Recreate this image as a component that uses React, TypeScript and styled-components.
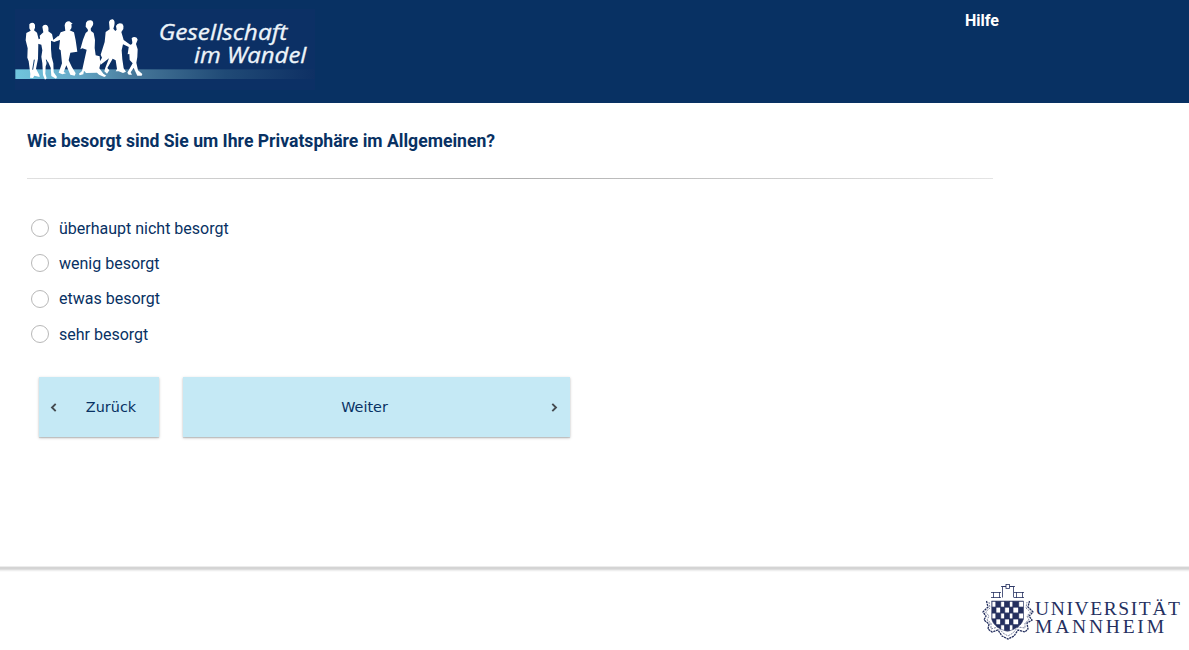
import React from "react";
import styled, { createGlobalStyle } from "styled-components";

const GlobalStyle = createGlobalStyle`
  * { box-sizing: border-box; }
  body { margin: 0; background: #fff; color: #083163; font-family: Roboto, "Liberation Sans", sans-serif; }
`;

const Page = styled.div`
  display: flex;
  flex-direction: column;
  height: 650px;
  overflow: hidden;
`;

const Header = styled.header`
  display: flex;
  justify-content: space-between;
  flex: 0 0 103px;
  padding: 9px 190px 0 15px;
  background: #083163;
`;

const HelpLink = styled.a`
  height: 24px;
  color: #fff;
  font-size: 16px;
  font-weight: 700;
  line-height: 24px;
`;

const Main = styled.main`
  display: flex;
  flex-direction: column;
  flex: 0 0 463px;
  padding: 25px 0 0 27px;
`;

const Question = styled.h1`
  margin: 0;
  font-size: 17.6px;
  font-weight: 700;
  line-height: 26px;
`;

const Divider = styled.div`
  width: 966px;
  height: 1px;
  margin: 24px 0 31.5px;
  background: linear-gradient(to right, #e0e0e0, #b0b0b0 50%, #e4e4e4);
`;

const Options = styled.div`
  display: flex;
  flex-direction: column;
`;

const Option = styled.label`
  display: flex;
  align-items: center;
  gap: 10px;
  height: 35.32px;
  padding-left: 4px;
  font-size: 16px;
`;

const Radio = styled.input`
  appearance: none;
  width: 18px;
  height: 18px;
  margin: 0;
  border: 1px solid #b8b8b8;
  border-radius: 50%;
  background: #fff;
`;

const Actions = styled.div`
  display: flex;
  gap: 24px;
  padding: 25.2px 0 0 12px;
`;

const NavButton = styled.button<{ $width: number }>`
  display: flex;
  align-items: center;
  width: ${(p) => p.$width}px;
  height: 60px;
  padding: 0 12px 0 11px;
  border: 0;
  background: #c5e9f5;
  box-shadow: 0 1px 3px rgba(0, 0, 0, 0.2), 0 1px 1px rgba(0, 0, 0, 0.14);
  color: #083163;
  font: 14.4px "DejaVu Sans", sans-serif;
`;

const ButtonText = styled.span<{ $left?: number; $right?: number }>`
  flex: 1;
  padding-left: ${(p) => p.$left ?? 0}px;
  padding-right: ${(p) => p.$right ?? 0}px;
  text-align: center;
`;

const Footer = styled.footer`
  display: flex;
  flex-direction: column;
  align-items: flex-end;
  gap: 9px;
  flex: 1;
  padding-right: 7px;
`;

const FooterShade = styled.div`
  width: calc(100% + 7px);
  height: 6px;
  margin-right: -7px;
  background: linear-gradient(#ececec 0 1px, #d4d4d4 1px 3px, #dedede 3px 4px, #efefef 4px 5px, #fafafa 5px);
`;

function StudyLogo() {
  return (
    <svg width="300" height="81" viewBox="45 27 900 243" role="img" aria-label="Gesellschaft im Wandel">
      <defs>
        <linearGradient id="band">
          <stop offset="0" stopColor="#70c5dd" />
          <stop offset=".2" stopColor="#66aac8" />
          <stop offset=".4" stopColor="#467799" />
          <stop offset=".7" stopColor="#204a76" />
          <stop offset="1" stopColor="#0e3064" />
        </linearGradient>
      </defs>
      <rect x="45" y="27" width="900" height="243" fill="#0c3065" />
      <rect x="46" y="208" width="899" height="29" fill="url(#band)" />
      <g fill="#fff">
        <path d="M88 73Q92 66 101 69Q107 73 105 83L102 91L111 98L116 118L125 113L126 120L115 129L114 176L108 206L118 225L119 231L103 227L99 234L90 233L91 222L86 184L82 173L83 145L77 121L79 99L92 92L88 85Z" />
        <path d="M127 80Q131 72 140 75Q147 79 145 94L156 102L160 120L175 107L178 112L163 126L153 122L153 147L155 171L160 190L161 217L171 231L168 236L154 228L152 203L143 183L137 199L136 221L140 235L135 239L129 225L127 190L124 170L127 151L124 134L109 130L109 123L121 120L119 107L130 97Z" />
        <path d="M194 76Q196 63 208 64L218 71L214 73Q217 86 209 91L222 97L227 121L232 155L211 158L206 181L216 202L227 220L224 227L211 224L199 196L191 216L198 220L187 223L176 218L186 190L182 151L177 147L180 120L164 125L160 120L175 112L182 97L196 92Z" />
        <path d="M258 68Q262 60 272 61Q282 63 279 75L272 86L273 93L281 99L285 120L284 144L287 166L299 169L301 192L298 205L310 221L319 227L313 231L297 224L291 218L258 219L252 212L250 223L239 226L237 221L246 213L253 181L260 149L247 145L241 148L249 119L257 99L264 93L263 88L257 80Z" />
        <path d="M327 66Q329 57 338 58Q346 61 343 76L340 86L346 93L350 89L348 78Q353 66 367 71Q372 76 370 87L364 96L371 120L391 134L398 132L395 139L388 142L369 133L365 151L367 178L371 205L378 215L369 219L356 214L347 214L351 207L347 181L338 176L322 204L328 211L321 221L313 214L316 203L327 175L302 194L299 185L306 173L302 164L314 126L317 96L329 88Z" />
        <path d="M395 115Q401 108 410 113L413 119L408 132L413 148L412 171L409 188L414 211L427 222L425 227L412 227L401 204L392 217L396 224L386 224L382 218L398 190L389 180L388 162L383 163L386 142L396 133L397 127Z" />
      </g>
      <path d="M103 179L98 209M139 179L144 201" stroke="#174475" strokeWidth="3" />
      <g fill="#edf4fa" stroke="#edf4fa" strokeWidth="1" fontFamily='"Open Sans", "Noto Sans", sans-serif' fontStyle="italic" fontWeight="500" fontSize="66">
        <text x="476" y="119" textLength="386" lengthAdjust="spacingAndGlyphs">Gesellschaft</text>
        <text x="582" y="188" textLength="337" lengthAdjust="spacingAndGlyphs">im Wandel</text>
      </g>
    </svg>
  );
}

function UniversityLogo() {
  const cells = Array.from({ length: 35 }, (_, i) => ({ x: i % 7, y: Math.floor(i / 7) }));
  const columns = [992, 996, 1000.8, 1004.8, 1009.5, 1013, 1018.8, 1023.5];
  const shield = "M991.5 601H1023.5V619Q1021 628 1007.5 631.5Q994 628 991.5 619Z";
  return (
    <svg width="202" height="64" viewBox="980 581 202 64" role="img" aria-label="Universität Mannheim">
      <defs>
        <clipPath id="shield"><path d={shield} /></clipPath>
      </defs>
      <g fill="none" stroke="#25305f" strokeWidth=".8">
        <path d="M991 592.5H1001M991 597.5H1001M993.5 592V598M999.5 592V598M1002.5 597.5V586.5H1013.5V597.5M1001 586.5H1015M1014 592.5H1024M1014 597.5H1024M1016.5 592V598M1022.5 592V598" />
        <rect x="1006" y="584.5" width="3.5" height="4" fill="#fff" />
        <path d="M986.5 601L988 607L983 612L986 616L984 620L989 624L988 629L992 632L998 630L1002 636L1008 639L1014 636L1018 630L1025 632L1028 629L1027 623L1032 620L1029 616L1033 612L1028 607L1029.5 601" strokeWidth="1.3" strokeDasharray="2.2 .7" />
        <path d="M989 602L990 608L985.5 612L989 616L987 620L991 623L991 629L998 627L1003 633L1008 636L1013 633L1018 627L1025 628L1025 623L1029 620L1027 616L1030.5 612L1026 608L1027 602" strokeWidth=".6" strokeDasharray="2 1" />
      </g>
      <g clipPath="url(#shield)">
        <rect x="991" y="601" width="34" height="31" fill="#fff" />
        {cells.map(({ x, y }) => (
          <rect
            key={`${x}-${y}`}
            x={columns[x]}
            y={601.3 + y * 5.9}
            width={columns[x + 1] - columns[x]}
            height="5.9"
            fill={(x + y) % 2 === 1 ? "#25305f" : "#fff"}
            stroke="#25305f"
            strokeWidth=".7"
          />
        ))}
      </g>
      <path d={shield} fill="none" stroke="#25305f" strokeWidth=".5" />
      <g fill="#25305f" fontFamily='"Liberation Serif", serif' fontSize="19.5">
        <text x="1035" y="615" textLength="145" lengthAdjust="spacing">UNIVERSITÄT</text>
        <text x="1035" y="633" textLength="129" lengthAdjust="spacing">MANNHEIM</text>
      </g>
    </svg>
  );
}

function Chevron({ back = false }: { back?: boolean }) {
  return (
    <svg width="7" height="10" viewBox="0 0 7 10" aria-hidden="true">
      <path d={back ? "M5.7 1.8L2 5.5L5.7 9.2" : "M1.3 1.8L5 5.5L1.3 9.2"} fill="none" stroke="#454b50" strokeWidth="1.9" />
    </svg>
  );
}

const answers = ["überhaupt nicht besorgt", "wenig besorgt", "etwas besorgt", "sehr besorgt"];

export default function App() {
  return (
    <Page>
      <GlobalStyle />
      <Header>
        <StudyLogo />
        <HelpLink>Hilfe</HelpLink>
      </Header>
      <Main>
        <Question>Wie besorgt sind Sie um Ihre Privatsphäre im Allgemeinen?</Question>
        <Divider />
        <Options>
          {answers.map((answer) => (
            <Option key={answer}>
              <Radio type="radio" name="privacy" />
              {answer}
            </Option>
          ))}
        </Options>
        <Actions>
          <NavButton $width={120}>
            <Chevron back />
            <ButtonText $left={18}>Zurück</ButtonText>
          </NavButton>
          <NavButton $width={387}>
            <ButtonText $right={16}>Weiter</ButtonText>
            <Chevron />
          </NavButton>
        </Actions>
      </Main>
      <Footer>
        <FooterShade />
        <UniversityLogo />
      </Footer>
    </Page>
  );
}
